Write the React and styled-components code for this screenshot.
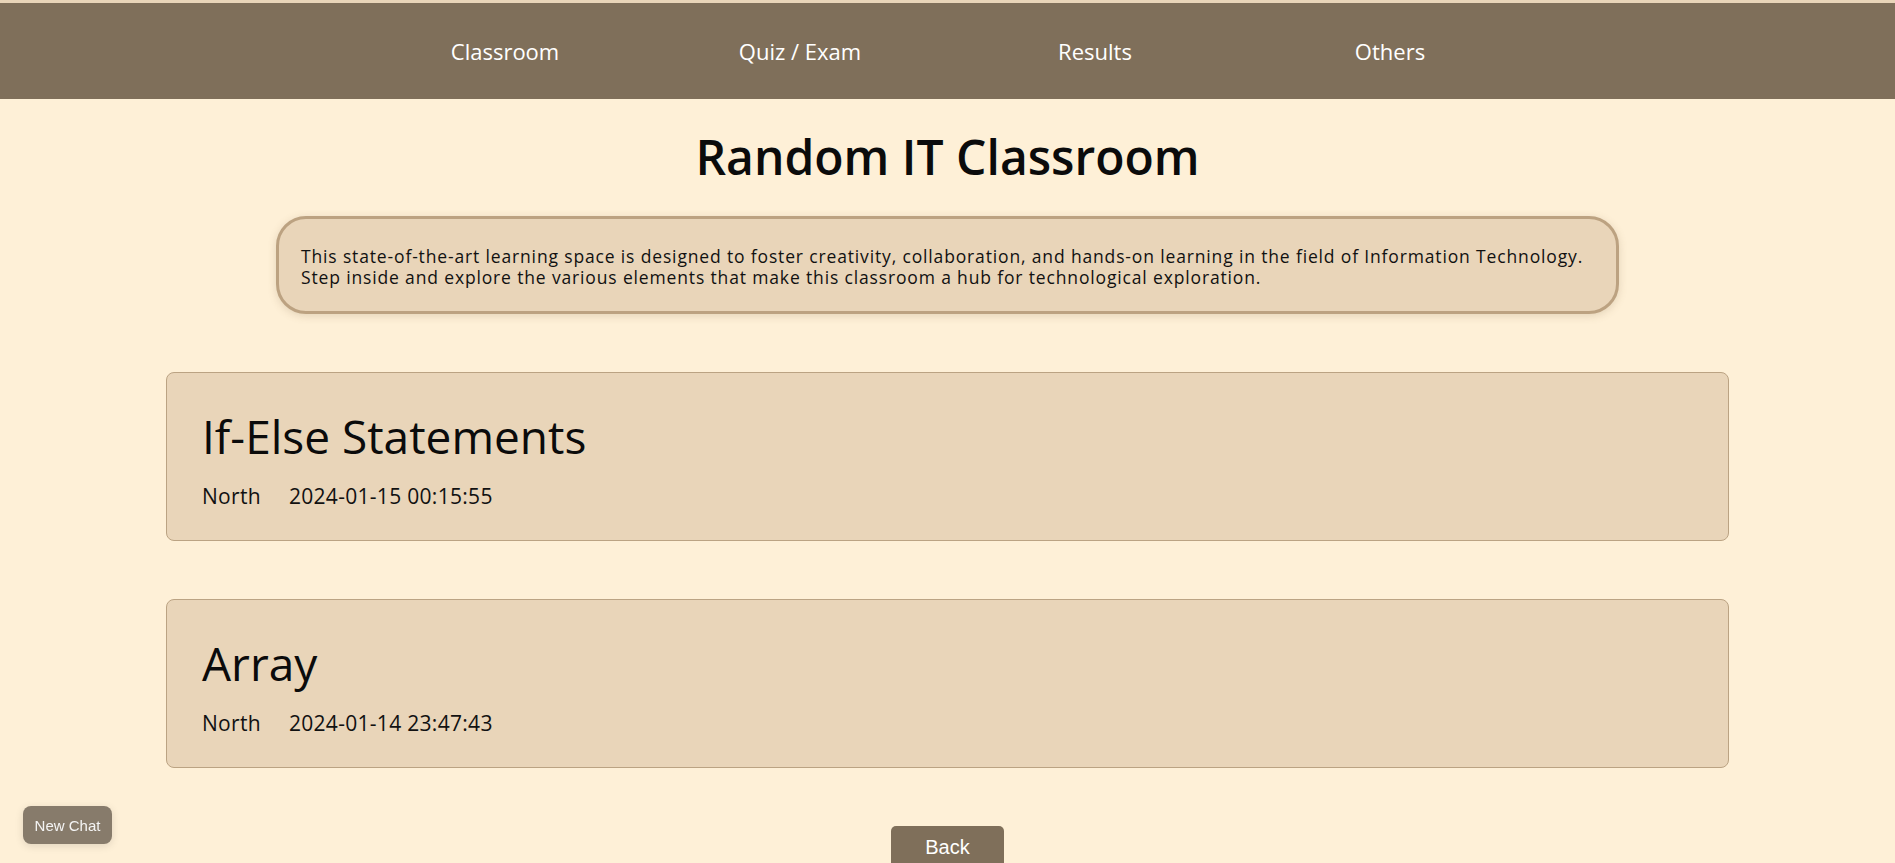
import React from 'react';
import styled, { createGlobalStyle } from 'styled-components';

const GlobalStyle = createGlobalStyle`
  html, body {
    margin: 0;
    padding: 0;
    background: #fef0d7;
    font-family: "Open Sans", "Noto Sans", sans-serif;
    color: #111;
  }
  * {
    box-sizing: border-box;
  }
`;

const NavBar = styled.nav`
  border-top: 3px solid #e9d5b9;
  background: #7f6f5a;
  height: 99px;
  display: flex;
  align-items: center;
  justify-content: center;
`;

const NavItem = styled.a`
  width: 295px;
  text-align: center;
  color: #fff;
  font-size: 22px;
  font-weight: 500;
  text-decoration: none;
  cursor: pointer;
`;

const Main = styled.main`
  display: flex;
  flex-direction: column;
  align-items: center;
  gap: 58px;
`;

const Title = styled.h1`
  margin: 29px 0 -28px;
  font-size: 48px;
  line-height: 1.2;
  font-weight: 600;
  color: #0b0b0b;
`;

const Intro = styled.div`
  width: 1343px;
  background: #e9d5b9;
  border: 3px solid #bca281;
  border-radius: 30px;
  padding: 27px 22px 23px;
  box-shadow: 0 2px 8px rgba(120, 95, 60, 0.2);
  font-size: 17.5px;
  letter-spacing: 0.85px;
  line-height: 21px;
  color: #111;
`;

const Card = styled.section`
  align-self: stretch;
  margin: 0 166px;
  background: #e9d5b9;
  border: 1px solid #bba383;
  border-radius: 8px;
  padding: 36px 35px 32px;
`;

const CardTitle = styled.h2`
  margin: 0 0 20px;
  font-size: 46px;
  line-height: 1.2;
  font-weight: 400;
  color: #0b0b0b;
`;

const Meta = styled.div`
  display: flex;
  gap: 28px;
  font-size: 21px;
  letter-spacing: 0.3px;
  line-height: 24px;
  color: #111;
`;

const BackButton = styled.button`
  background: #7f6f5a;
  color: #fff;
  border: none;
  border-radius: 5px;
  padding: 10px 34px;
  font-family: "Liberation Sans", Arial, sans-serif;
  font-size: 20px;
  cursor: pointer;
`;

const ChatButton = styled.button`
  position: fixed;
  left: 23px;
  bottom: 19px;
  width: 89px;
  height: 38px;
  background: #877b6b;
  color: #f4f4f4;
  border: none;
  border-radius: 8px;
  box-shadow: 0 2px 8px rgba(0, 0, 0, 0.12);
  font-family: "Liberation Sans", Arial, sans-serif;
  font-size: 15px;
  cursor: pointer;
`;

const links = ['Classroom', 'Quiz / Exam', 'Results', 'Others'];

const lessons = [
  { title: 'If-Else Statements', area: 'North', date: '2024-01-15 00:15:55' },
  { title: 'Array', area: 'North', date: '2024-01-14 23:47:43' },
];

export default function App() {
  return (
    <>
      <GlobalStyle />
      <NavBar>
        {links.map((l) => (
          <NavItem key={l}>{l}</NavItem>
        ))}
      </NavBar>
      <Main>
        <Title>Random IT Classroom</Title>
        <Intro>
          This state-of-the-art learning space is designed to foster creativity, collaboration, and
          hands-on learning in the field of Information Technology.
          <br />
          Step inside and explore the various elements that make this classroom a hub for
          technological exploration.
        </Intro>
        {lessons.map((c) => (
          <Card key={c.title}>
            <CardTitle>{c.title}</CardTitle>
            <Meta>
              <span>{c.area}</span>
              <span>{c.date}</span>
            </Meta>
          </Card>
        ))}
        <BackButton>Back</BackButton>
      </Main>
      <ChatButton>New Chat</ChatButton>
    </>
  );
}
